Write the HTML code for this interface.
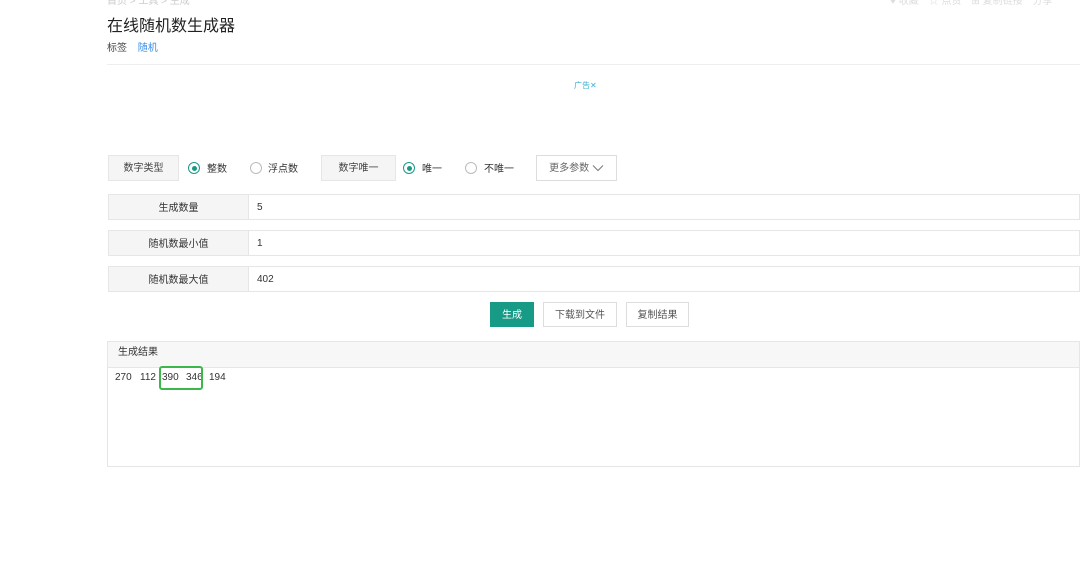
<!DOCTYPE html><html><head><meta charset="utf-8"><style>
body{margin:0;width:1080px;height:584px;background:#fff;font-family:"Liberation Sans","Noto Sans CJK SC",sans-serif;color:#333;position:relative;overflow:hidden;font-size:10px}
.a{position:absolute}
.lbl{position:absolute;background:#f5f5f5;border:1px solid #e6e6e6;box-sizing:border-box;color:#444;display:flex;align-items:center;justify-content:center;padding-bottom:3px}
.row{position:absolute;left:108px;width:972px;height:26px;border:1px solid #e6e6e6;box-sizing:border-box}
.row .l{position:absolute;left:0;top:0;width:140px;height:24px;background:#f5f5f5;border-right:1px solid #e6e6e6;display:flex;align-items:center;justify-content:center;box-sizing:border-box;padding-bottom:2px}
.row .v{position:absolute;left:148px;top:0;height:24px;display:flex;align-items:center;box-sizing:border-box}
.rad{position:absolute;width:12px;height:12px;border:1px solid #bbb;border-radius:50%;box-sizing:border-box;background:#fff}
.rad.on{border-color:#1a9a85}
.rad.on:after{content:"";position:absolute;left:2.5px;top:2.5px;width:5px;height:5px;border-radius:50%;background:#1a9a85}
.btn{position:absolute;top:302px;height:25px;box-sizing:border-box;border:1px solid #ddd;color:#555;background:#fff;display:flex;align-items:center;justify-content:center;padding-bottom:2px}
.n{position:absolute;top:372px}
</style></head><body>
<div class="a" style="left:107px;top:-8px;color:#ccc">首页 &gt; 工具 &gt; 生成</div>
<div class="a" style="left:890px;top:-8px;color:#ddd">♥ 收藏　☆ 点赞　⊞ 复制链接　分享</div>
<div class="a" style="left:107px;top:12px;font-size:16px;color:#222">在线随机数生成器</div>
<div class="a" style="left:107px;top:39px;color:#444">标签 <span style="color:#3a8ee6;margin-left:8px">随机</span></div>
<div class="a" style="left:107px;top:64px;width:973px;height:1px;background:#eee"></div>
<div class="a" style="left:574px;top:80px;font-size:8px;color:#3ab0d0">广告✕</div>

<div class="lbl" style="left:108px;top:155px;width:71px;height:26px">数字类型</div>
<div class="rad on" style="left:188px;top:162px"></div><div class="a" style="left:207px;top:160px">整数</div>
<div class="rad" style="left:250px;top:162px"></div><div class="a" style="left:268px;top:160px">浮点数</div>
<div class="lbl" style="left:321px;top:155px;width:75px;height:26px">数字唯一</div>
<div class="rad on" style="left:403px;top:162px"></div><div class="a" style="left:422px;top:160px">唯一</div>
<div class="rad" style="left:465px;top:162px"></div><div class="a" style="left:484px;top:160px">不唯一</div>
<div class="lbl" style="left:536px;top:155px;width:81px;height:26px;background:#fff;border-color:#ddd;color:#666">更多参数&nbsp;<svg width="12" height="8" viewBox="0 0 12 8" style="margin-top:2px"><path d="M1 1.5L6 6.5L11 1.5" fill="none" stroke="#777" stroke-width="1"/></svg></div>

<div class="row" style="top:194px"><div class="l">生成数量</div><div class="v">5</div></div>
<div class="row" style="top:230px"><div class="l">随机数最小值</div><div class="v">1</div></div>
<div class="row" style="top:266px"><div class="l">随机数最大值</div><div class="v">402</div></div>

<div class="btn" style="left:490px;width:44px;background:#179a86;border-color:#179a86;color:#fff">生成</div>
<div class="btn" style="left:543px;width:74px">下载到文件</div>
<div class="btn" style="left:626px;width:63px">复制结果</div>

<div class="a" style="left:107px;top:341px;width:973px;height:126px;border:1px solid #e6e6e6;box-sizing:border-box">
<div style="height:25px;background:#f7f7f7;border-bottom:1px solid #e6e6e6;line-height:22px;padding-left:10px">生成结果</div>
</div>
<span class="n" style="left:115px">270</span><span class="n" style="left:140px">112</span><span class="n" style="left:162px">390</span><span class="n" style="left:186px">346</span><span class="n" style="left:209px">194</span>
<div class="a" style="left:159px;top:366px;width:44px;height:24px;border:2px solid #3cb84a;border-radius:3px;box-sizing:border-box"></div>
</body></html>
